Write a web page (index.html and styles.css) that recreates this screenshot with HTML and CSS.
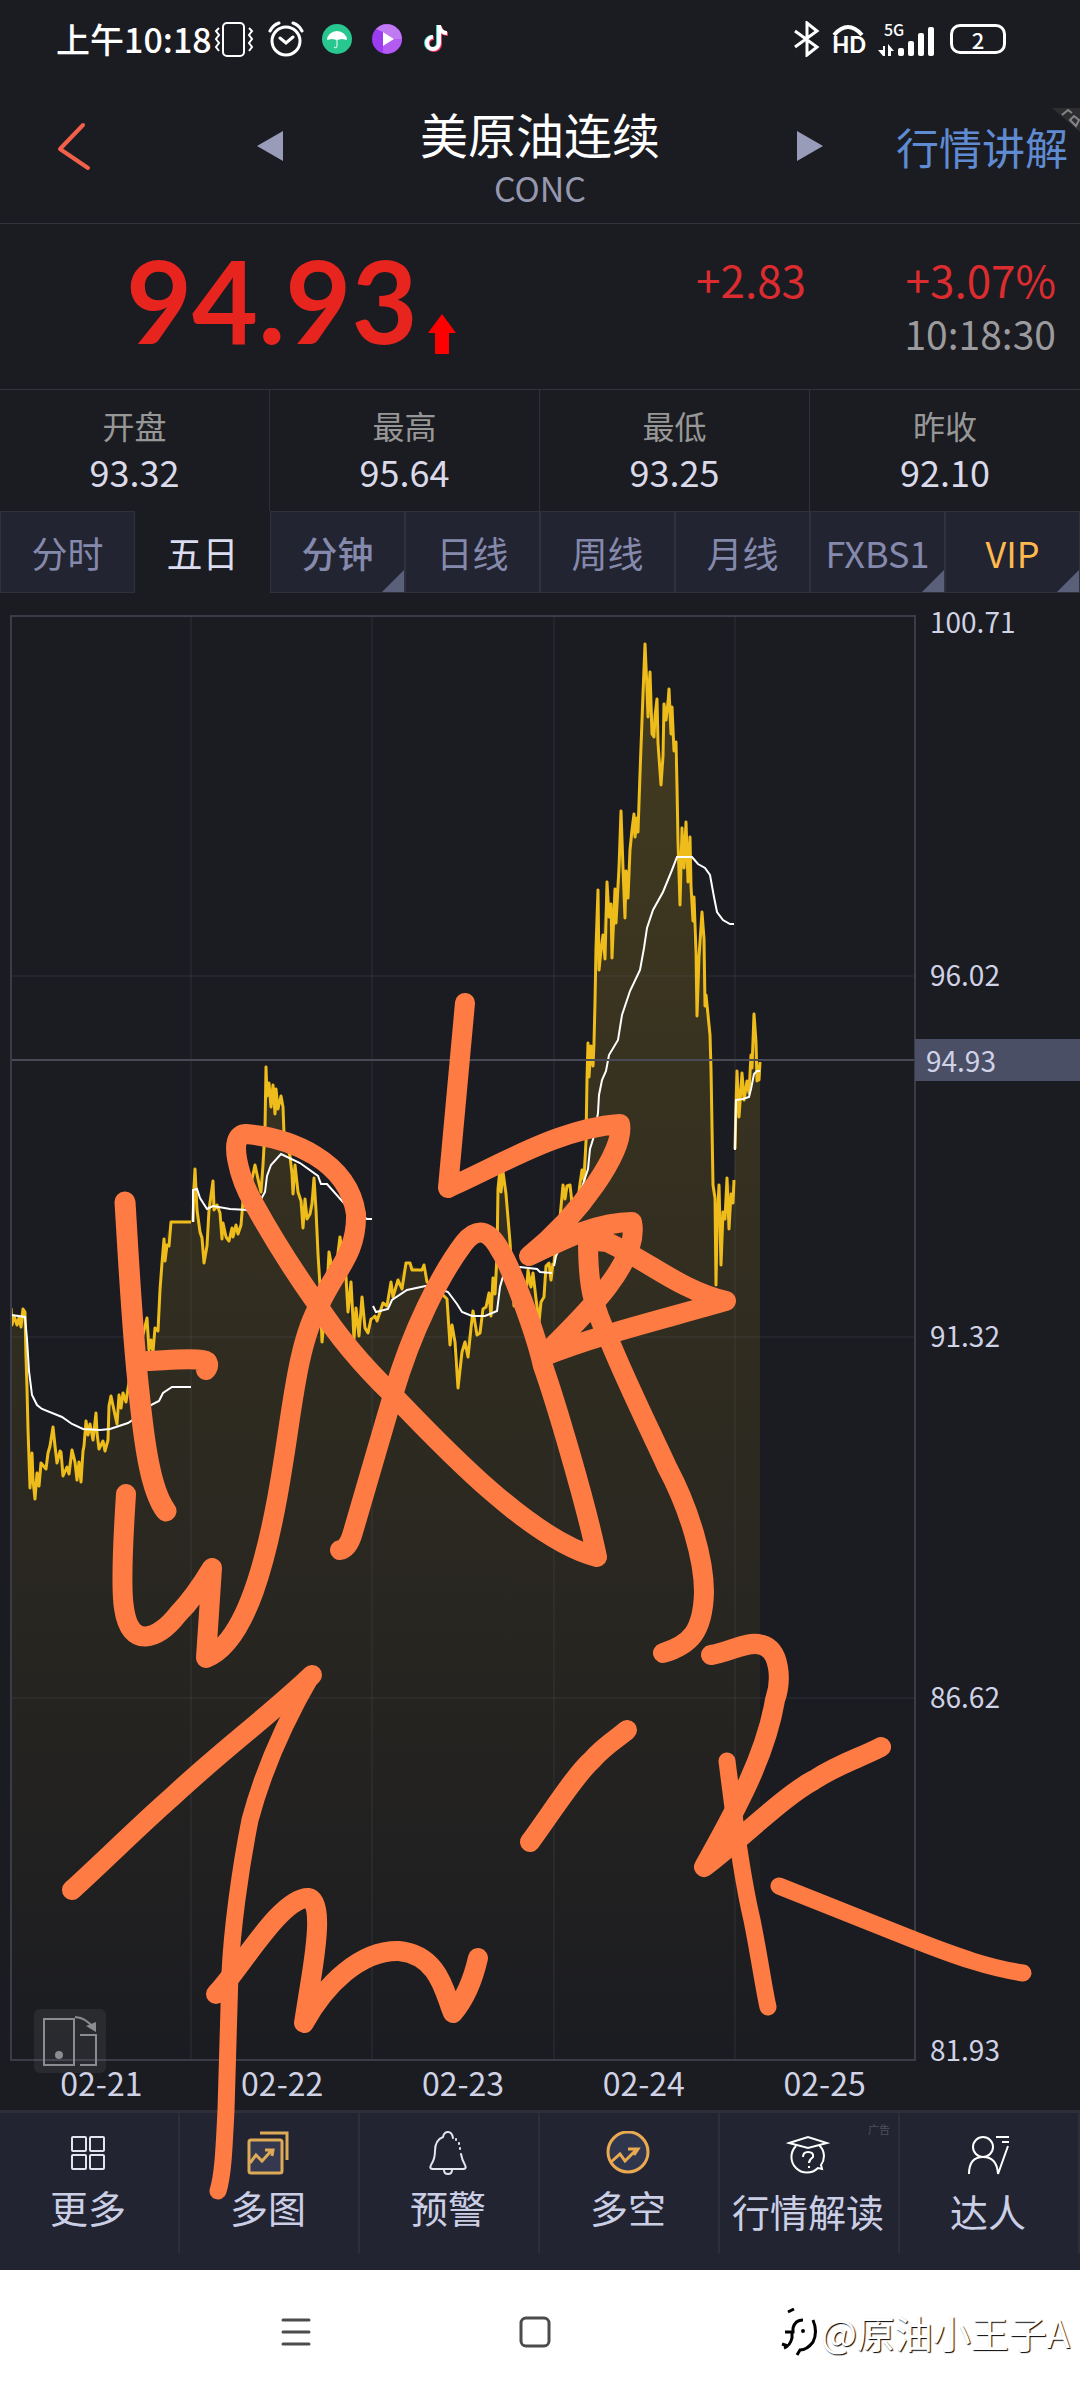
FILE: index.html
```html
<!DOCTYPE html>
<html lang="zh-CN">
<head>
  <meta charset="UTF-8" />
  <meta name="viewport" content="width=device-width, initial-scale=1.0"/>
  <title>美原油连续</title>
  <link rel="stylesheet" href="styles.css">
</head>
<body>
  <div class="screen">
    <div class="status-bar">
      <span class="clock">上午10:18</span>
      <svg class="vibrate" width="40" height="38" viewBox="0 0 40 38" fill="none" stroke="#fff" stroke-width="2">
        <rect x="9" y="3" width="21" height="33" rx="4"/>
        <path d="M5 8l-3 3 3 4-3 4 3 4-3 4 3 4M35 8l3 3-3 4 3 4-3 4 3 4-3 4"/>
      </svg>
      <svg class="alarm" width="36" height="38" viewBox="0 0 36 38" fill="none" stroke="#fff" stroke-width="3" stroke-linecap="round">
        <circle cx="18" cy="21" r="14"/>
        <path d="M12 18l6 5 7-6M2 11q3-6 9-8M34 11q-3-6-9-8"/>
      </svg>
      <svg class="app-dot" width="30" height="30" viewBox="0 0 30 30">
        <circle cx="15" cy="15" r="15" fill="#27c78f"/>
        <path d="M5 16a10 9 0 0 1 20 0l-5-1-5 1-5-1z" fill="#fff"/>
        <path d="M15 15v7q0 3-3 1" fill="none" stroke="#fff" stroke-width="1"/>
      </svg>
      <svg class="app-dot" width="30" height="30" viewBox="0 0 30 30">
        <circle cx="15" cy="15" r="15" fill="#9c3cf0"/>
        <path d="M4 5a15 15 0 0 1 26 10L22 15 11 8z" fill="#c07af2"/>
        <path d="M22 15l8 0a15 15 0 0 1-19 14v-7z" fill="#b45cf2"/>
        <path d="M11 8v14l11-7z" fill="#fff"/>
      </svg>
      <svg class="app-dot" width="28" height="30" viewBox="0 0 28 30" fill="none" stroke-width="4">
        <path d="M16 1v18a6 6 0 1 1-6-6M16 2q2 7 8 7" stroke="#25d9d3"/>
        <path d="M18 2v18a6 6 0 1 1-6-6M18 3q2 7 8 7" stroke="#f0355d"/>
        <path d="M17 1v18a6 6 0 1 1-6-6M17 2q2 7 8 7" stroke="#fff"/>
      </svg>
      <span class="spacer"></span>
      <svg class="bluetooth" width="26" height="36" viewBox="0 0 26 36" fill="none" stroke="#fff" stroke-width="3">
        <path d="M1 10l22 16-10 8V2l10 8L1 26"/>
      </svg>
      <span class="hd">
        <svg width="32" height="12" viewBox="0 0 32 12" fill="none" stroke="#fff" stroke-width="4"><path d="M2 11q14-16 28 0"/></svg>
        HD
      </span>
      <span class="signal">
        <small>5G</small>
        <svg width="58" height="36" viewBox="0 0 58 36" fill="#fff">
          <path d="M5 35V25h2v10H5L0 29h5M10 35V23l6 7h-3v5z"/>
          <rect x="20" y="27" width="6" height="8" rx="2"/>
          <rect x="30" y="20" width="6" height="15" rx="2"/>
          <rect x="40" y="12" width="6" height="23" rx="2"/>
          <rect x="50" y="6" width="6" height="29" rx="2"/>
        </svg>
      </span>
      <span class="battery">2</span>
    </div>

    <header class="header">
      <button class="icon-btn back" aria-label="返回">
        <svg width="40" height="52" viewBox="0 0 40 52" fill="none" stroke="#f2604a" stroke-width="4" stroke-linecap="round" stroke-linejoin="round"><path d="M29 5L6 29l28 19"/></svg>
      </button>
      <button class="icon-btn" aria-label="上一个">
        <svg width="26" height="30" viewBox="0 0 26 30" fill="#989cb8"><path d="M26 0v30L0 15z"/></svg>
      </button>
      <div class="title">
        <h1>美原油连续</h1>
        <p>CONC</p>
      </div>
      <button class="icon-btn" aria-label="下一个">
        <svg width="26" height="30" viewBox="0 0 26 30" fill="#989cb8"><path d="M0 0v30l26-15z"/></svg>
      </button>
      <a class="lecture" href="#">行情讲解</a>
      <svg class="corner" width="28" height="24" viewBox="0 0 28 24"><path d="M0 0h28v24z" fill="#2e2e31"/><path d="M10 7l6-5 4 3M18 12l4-4 5 4-3 6z" fill="none" stroke="#85868a" stroke-width="2"/></svg>
    </header>

    <section class="quote">
      <div class="price">
        <strong>94.93</strong>
        <svg width="28" height="40" viewBox="0 0 28 40" fill="#f00"><path d="M14 0l14 19h-7v21H7V19H0z"/></svg>
      </div>
      <div class="change">+2.83</div>
      <div class="percent">
        <div class="change">+3.07%</div>
        <time>10:18:30</time>
      </div>
    </section>

    <dl class="stats">
      <div><dt>开盘</dt><dd>93.32</dd></div>
      <div><dt>最高</dt><dd>95.64</dd></div>
      <div><dt>最低</dt><dd>93.25</dd></div>
      <div><dt>昨收</dt><dd>92.10</dd></div>
    </dl>

    <nav class="tabs">
      <button>分时</button>
      <button class="active">五日</button>
      <button class="more strong">分钟</button>
      <button>日线</button>
      <button>周线</button>
      <button>月线</button>
      <button class="more">FXBS1</button>
      <button class="more vip">VIP</button>
    </nav>

    <main class="chart">
      <div class="plot">
        <svg viewBox="11 616 904 1444" preserveAspectRatio="none">
          <defs>
            <linearGradient id="fade" gradientUnits="userSpaceOnUse" x1="0" y1="616" x2="0" y2="2060">
              <stop offset="0" stop-color="#f5c518" stop-opacity="0.19"/>
              <stop offset="1" stop-color="#f5c518" stop-opacity="0"/>
            </linearGradient>
          </defs>
          <path fill="url(#fade)" d="M11 2060V1316L25 1312 28 1429 30 1488 32 1453 35 1495 41 1463 46 1469 53 1430 57 1463 61 1452 63 1474 72 1453 77 1475 81 1478 86 1424 93 1440 96 1416 99 1449 105 1448 111 1400 117 1422 123 1395 130 1378 138 1357 147 1320 150 1348 155 1330 158 1331 164 1242 171 1222H191L195 1172 200 1232 204 1260 213 1183 217 1205 222 1236 229 1241 241 1225 243 1201 255 1165 261 1190 266 1072 271 1103 275 1110 283 1107 284 1134 292 1174 298 1192 303 1226 307 1217 314 1180 318 1254 322 1340 329 1254 335 1277 340 1240 348 1310 354 1334 365 1328 377 1321 398 1280 406 1263 422 1270 427 1282 447 1299 450 1342 458 1384 465 1342 471 1328 480 1333 489 1295 495 1290 499 1176 506 1194 514 1303 528 1272 539 1320 546 1268 553 1263 563 1188 577 1206 586 1141 588 1050 594 1043 598 895 599 968 607 888 612 954 621 816 625 916 632 830 638 828 645 648 648 715 651 690 654 734 657 704 661 782 664 706 669 694 677 787 680 902 686 825 691 886 697 1014 702 914 705 1006 710 1035 713 1185 716 1283 719 1188 721 1262 727 1180 734 1190 735 1149 737 1075 739 1115 742 1075 749 1093 754 1016 757 1080 760 1062V2060z"/>
          <path class="grid" d="M11 976H915M11 1337H915M11 1698H915M191 616V2060M372 616V2060M554 616V2060M735 616V2060"/>
          <g class="line">
            <path d="M11 1308L12 1325 14 1316 17 1325 19 1318 21 1327 23 1309 25 1312 26 1357 27 1388 28 1429 30 1488 32 1453 33 1480 35 1499 37 1473 39 1486 41 1463 46 1469 48 1453 50 1446 53 1427 55 1446 57 1463 60 1451 61 1452 63 1476 67 1467 69 1474 72 1450 75 1462 77 1480 79 1462 81 1482 83 1451 84 1446 86 1421 88 1435 90 1424 93 1440 96 1413 97 1433 99 1449 103 1441 105 1451 108 1440 109 1406 111 1396 115 1415 117 1424 119 1395 121 1408 123 1393 126 1402 130 1376 132 1388 138 1357 142 1339 147 1318 149 1350 151 1340 153 1352 155 1328 158 1331 160 1290 162 1263 164 1239 165 1261 167 1245 169 1246 171 1222 191 1222"/>
            <path d="M193 1222L194 1187 195 1169 197 1210 200 1232 202 1238 204 1263 207 1246 209 1210 213 1181 214 1210 217 1205 220 1213 222 1239 223 1223 226 1237 229 1241 232 1228 233 1237 236 1225 238 1234 241 1225 243 1201 247 1210 252 1179 255 1165 258 1179 261 1192 263 1165 265 1129 266 1067 267 1096 269 1083 271 1107 273 1085 275 1114 276 1089 278 1109 281 1096 283 1107 284 1134 290 1156 292 1174 293 1194 295 1165 298 1192 301 1201 303 1228 305 1199 307 1219 310 1214 312 1204 314 1178 316 1210 318 1254 320 1286 322 1342 324 1320 327 1290 329 1252 332 1268 335 1277 340 1237 343 1259 346 1277 348 1312 351 1282 354 1339 356 1308 359 1336 362 1297 365 1328 368 1333 371 1319 373 1318"/>
            <path d="M373 1318L375 1316 377 1321 383 1303 387 1306 391 1282 393 1297 398 1280 402 1289 406 1263 410 1263 412 1270 422 1270 424 1265 427 1282 432 1285 438 1290 447 1299 450 1345 452 1325 455 1342 458 1388 462 1352 465 1342 468 1357 471 1328 473 1311 477 1335 480 1333 483 1309 486 1307 489 1293 491 1316 493 1278 495 1294 497 1256 498 1189 500 1170 501 1192 503 1172 506 1194 508 1218 510 1242 514 1306 518 1280 522 1284 527 1285 528 1270 531 1287 533 1273 536 1299 539 1322 541 1302 544 1297 546 1266 549 1263 551 1280 553 1263"/>
            <path d="M554 1263L556 1242 560 1218 563 1185 565 1199 567 1186 570 1185 572 1203 577 1208 580 1184 582 1170 584 1180 586 1141 587 1079 588 1043 589 1077 591 1046 593 1066 594 1043 595 1002 596 948 598 890 599 970 601 950 603 935 605 959 607 882 609 917 611 904 612 958 615 889 616 923 619 868 621 811 623 868 625 918 626 871 628 898 630 850 632 830 634 814 635 837 637 818 638 832 640 774 641 747 643 694 645 644 647 689 648 717 649 689 650 672 652 734 654 737 655 716 657 699 658 743 661 785 663 756 664 704 666 720 668 703 669 689 671 734 672 707 674 751 676 742 677 787 678 841 680 905 681 868 682 828 684 868 686 822 688 882 690 837 691 886 693 921 694 897 696 953 697 1016 699 957 702 912 704 939 705 1006 706 995 708 1015 710 1035 711 1069 712 1127 713 1185 715 1198 716 1285 717 1225 719 1185 721 1265 723 1212 725 1219 727 1178 729 1229 731 1194 733 1203 734 1180"/>
            <path d="M735 1149L736 1104 737 1071 739 1117 742 1073 744 1100 747 1081 749 1093 751 1055 752 1068 754 1014 756 1042 757 1081 758 1066 759 1080 760 1062"/>
          </g>
          <g class="avg">
            <path d="M11 1315L25 1317 27 1339 29 1371 32 1395 37 1405 42 1409 62 1417 72 1424 83 1429 100 1430 110 1429 128 1423 137 1417 147 1407 159 1401 163 1393 172 1387 191 1387"/>
            <path d="M193 1222V1190L197 1189 200 1198 207 1209 213 1206 230 1209 248 1210 260 1201 265 1192 267 1176 271 1165 281 1154 300 1163 318 1176 321 1184 327 1184 350 1210 367 1219 372 1219"/>
            <path d="M373 1306L376 1312 388 1309 392 1300 407 1290 430 1285 448 1292 457 1304 462 1312 472 1316 485 1316 497 1311 500 1287 504 1273 520 1267 537 1269 540 1272 552 1273"/>
            <path d="M554 1266L556 1256 568 1230 588 1169 590 1149 594 1136 598 1113 599 1095 602 1080 606 1071 609 1055 618 1040 622 1015 630 991 640 970 644 948 647 928 653 910 663 892 672 870 677 857 692 857 698 864 705 868 710 875 714 897 717 912 723 920 730 924 734 924"/>
            <path d="M735 1150L736 1100 743 1099 749 1097 751 1089 754 1074 757 1071 760 1071"/>
          </g>
          <path class="cross" d="M11 1060H915"/>
        </svg>
        <button class="rotate" aria-label="横屏">
          <svg width="72" height="64" viewBox="0 0 72 64" fill="none" stroke="#8b8c90" stroke-width="2">
            <path d="M10 10h30v46H10zM46 26h16v30H46M41 8q12 1 18 11"/>
            <path d="M52 17l10-4v10z" fill="#8b8c90" stroke="none"/>
            <circle cx="25" cy="46" r="3" fill="#8b8c90"/>
          </svg>
        </button>
      </div>
      <div class="axis">
        <div><span class="top">100.71</span><span>96.02</span></div>
        <div><span>91.32</span></div>
        <div><span>86.62</span></div>
        <div><span class="bottom">81.93</span></div>
        <span class="tag">94.93</span>
      </div>
      <div class="dates">
        <span>02-21</span><span>02-22</span><span>02-23</span><span>02-24</span><span>02-25</span>
      </div>
    </main>

    <nav class="toolbar">
      <a href="#">
        <svg width="44" height="44" viewBox="0 0 44 44" fill="none" stroke="#e4e4ee" stroke-width="2">
          <rect x="6" y="6" width="14" height="14" rx="1"/><rect x="24" y="6" width="14" height="14" rx="1"/>
          <rect x="6" y="24" width="14" height="14" rx="1"/><rect x="24" y="24" width="14" height="14" rx="1"/>
        </svg>
        更多
      </a>
      <a href="#">
        <svg width="44" height="44" viewBox="0 0 44 44" fill="none" stroke="#ddaa58" stroke-width="3">
          <path d="M14 2h27v27"/>
          <rect x="3" y="9" width="33" height="33" rx="2" fill="#343950"/>
          <path d="M4 32l6-8 6 6 10-11M19 19h8l-1 6"/>
        </svg>
        多图
      </a>
      <a href="#">
        <svg width="44" height="44" viewBox="0 0 44 44" fill="none" stroke="#e4e4ee" stroke-width="2" stroke-linecap="round">
          <path d="M27 7q-1-6-5-6t-5 5Q9 9 9 20 9 28 5 34 3 38 7 38H37q4 0 2-4-3-5-4-11M18 39q0 4 4 4t4-4"/>
          <path d="M30 8v1M33 12v1M34 17v1"/>
        </svg>
        预警
      </a>
      <a href="#">
        <svg width="44" height="44" viewBox="0 0 44 44" fill="none" stroke="#eaaa50" stroke-width="3">
          <circle cx="22" cy="21" r="20" fill="#30364e"/>
          <path d="M5 31l9-8 5 7 11-11M22 18h10l-4 6"/>
        </svg>
        多空
      </a>
      <a href="#" class="low">
        <svg width="44" height="44" viewBox="0 0 44 44" fill="none" stroke="#fff" stroke-width="2">
          <path d="M3 12l19-6 19 6-19 5zM10 15a15 15 0 1 0 22 22l4 1-1-4a15 15 0 0 0-2-20"/>
          <path d="M17 26q0-5 5-5 6 0 5 5-4 3-4 6M23 35v2"/>
        </svg>
        行情解读
        <small>广告</small>
      </a>
      <a href="#" class="low">
        <svg width="44" height="44" viewBox="0 0 44 44" fill="none" stroke="#fff" stroke-width="2">
          <circle cx="17" cy="16" r="10"/>
          <path d="M3 43q0-17 14-17t15 17l10-28M30 6h13M36 11h7"/>
        </svg>
        达人
      </a>
    </nav>

    <footer class="system-nav">
      <button class="recent" aria-label="最近任务"><svg width="30" height="28" viewBox="0 0 30 28" stroke="#4c4c4c" stroke-width="3" stroke-linecap="round"><path d="M2 2h26M2 14h26M2 26h26"/></svg></button>
      <button class="home" aria-label="主屏幕"><svg width="32" height="32" viewBox="0 0 32 32" fill="none" stroke="#4c4c4c" stroke-width="3"><rect x="2" y="2" width="28" height="28" rx="5"/></svg></button>
      <span class="watermark">
        <svg width="44" height="48" viewBox="0 0 44 48" fill="none" stroke="#000" stroke-width="3">
          <path d="M11 4l6-3M8 24h8v-4q2-8 10-8M15 24v6q-2 8-8 10M36 12q5 12 0 22-6 8-13 8l-3 5M5 36l6 2"/>
          <circle cx="26" cy="23" r="1" stroke-width="2"/>
        </svg>
        @原油小王子A
      </span>
    </footer>

    <!-- hand-drawn marks over the whole screen -->
    <svg class="doodle" viewBox="0 0 1080 2400">
      <path class="fat" d="M125 1202C128 1250 132 1330 139 1392 144 1440 150 1490 166 1511"/>
      <path d="M147 1361C170 1360 190 1358 202 1360 210 1361 209 1366 206 1370"/>
      <path d="M126 1494C123 1540 121 1590 124 1608 130 1650 158 1640 178 1614 190 1602 203 1583 212 1568L206 1658C246 1642 268 1560 283 1464 292 1410 298 1340 320 1304 335 1270 357 1255 356 1214 348 1160 290 1138 246 1134 226 1134 240 1180 254 1204 275 1242 300 1280 317 1304 340 1340 365 1368 393 1395 440 1444 530 1540 597 1557 585 1500 555 1400 543 1366 535 1330 510 1265 500 1250 488 1228 476 1228 464 1243 440 1275 412 1330 393 1395 380 1440 362 1500 353 1532 350 1543 346 1549 340 1550"/>
      <path d="M465 1003L448 1188C500 1165 560 1128 620 1124 625 1150 580 1215 529 1256 570 1236 600 1222 632 1222 640 1260 590 1310 542 1357 600 1334 660 1320 726 1301 680 1290 650 1262 607 1242L588 1240C588 1285 592 1305 610 1342 630 1390 650 1430 667 1467 690 1510 704 1560 704 1592 703 1632 690 1645 663 1653"/>
      <path d="M711 1655C730 1652 748 1640 762 1645 780 1650 782 1680 775 1700 765 1760 730 1820 704 1867 740 1840 785 1795 814 1780 840 1763 860 1758 881 1747"/>
      <path class="thin" d="M727 1761C732 1800 740 1870 752 1920 760 1960 764 1990 768 2007"/>
      <path class="thin" d="M779 1886L907 1937C960 1958 990 1968 1023 1973"/>
      <path d="M530 1842C550 1815 575 1775 592 1760 605 1745 618 1738 627 1730"/>
      <path d="M72 1890C105 1860 140 1825 172 1797 220 1752 270 1715 312 1675"/>
      <path class="thin" d="M312 1675C280 1730 262 1775 250 1820 240 1870 232 1930 230 1973 228 2030 227 2080 226 2110 224 2150 223 2175 218 2191"/>
      <path d="M216 1994C240 1970 280 1898 308 1898 322 1900 317 1940 312 1973L304 2023C325 1985 360 1950 399 1951 440 1955 445 1995 453 2013 464 2000 473 1980 478 1958"/>
    </svg>
  </div>
</body>
</html>
```
FILE: styles.css
```css
* {
  box-sizing: border-box;
}

body {
  margin: 0;
  background-color: #fff;
  font-family: "Noto Sans CJK SC", "Noto Sans", sans-serif;
  color: #d0d2e6;
}

h1, p, dl, dd {
  margin: 0;
}

button {
  margin: 0;
  padding: 0;
  border: none;
  background: none;
  font: inherit;
  color: inherit;
  cursor: pointer;
}

a {
  color: inherit;
  text-decoration: none;
}

svg {
  display: block;
  flex: none;
}

.screen {
  position: relative;
  background-color: #1b1c21;
  overflow: hidden;
}

/* status bar */
.status-bar {
  display: flex;
  align-items: center;
  padding: 20px 74px 20px 56px;
  color: #fff;
}

.clock {
  font-size: 34px;
  font-weight: 500;
  line-height: 38px;
}

.vibrate { margin-left: 2px; }
.alarm { margin-left: 14px; }
.app-dot { margin-left: 18px; }
.app-dot + .app-dot { margin-left: 20px; }
.spacer { flex: 1; }

.hd {
  margin-left: 12px;
  font-family: Lato, sans-serif;
  font-size: 22px;
  font-weight: 900;
  line-height: 18px;
}

.signal {
  position: relative;
  margin-left: 12px;
}

.signal small {
  position: absolute;
  top: 0;
  left: 6px;
  font-size: 16px;
  font-weight: 500;
  line-height: 16px;
}

.battery {
  width: 56px;
  margin-left: 14px;
  border: 3px solid #fff;
  border-radius: 10px;
  font-size: 22px;
  font-weight: 500;
  line-height: 24px;
  text-align: center;
}

/* header */
.header {
  position: relative;
  display: grid;
  grid-template-columns: 1fr 84px 456px 84px 1fr;
  justify-items: center;
  align-items: center;
  padding: 23px 0 15px;
  border-bottom: 1px solid #32333d;
}

.icon-btn,
.lecture {
  padding-bottom: 18px;
}

.header .back {
  justify-self: start;
  margin-left: 54px;
}

.title {
  text-align: center;
}

.title h1 {
  margin-bottom: 3px;
  font-size: 48px;
  font-weight: 400;
  line-height: 64px;
  color: #fff;
}

.title p {
  font-size: 34px;
  line-height: 40px;
  color: #9698b0;
}

.lecture {
  justify-self: end;
  margin-right: 12px;
  font-size: 43px;
  line-height: 56px;
  white-space: nowrap;
  color: #5f8bd2;
}

.corner {
  position: absolute;
  top: 30px;
  right: 0;
}

/* last price */
.quote {
  display: grid;
  grid-template-columns: 1fr 160px 250px;
  padding: 16px 24px 29px 126px;
  border-bottom: 1px solid #32333d;
}

.price {
  display: flex;
  align-items: flex-end;
  gap: 10px;
}

.price strong {
  font-family: Lato, sans-serif;
  font-size: 114px;
  font-weight: 700;
  line-height: 120px;
  color: #e8241f;
}

.price svg {
  margin-bottom: 6px;
}

.change {
  padding-top: 11px;
  font-size: 44px;
  line-height: 56px;
  text-align: right;
  color: #dc2c30;
}

.percent {
  text-align: right;
}

.percent time {
  display: block;
  font-size: 39px;
  line-height: 53px;
  color: #9b9b9f;
}

.stats {
  display: grid;
  grid-template-columns: repeat(4, 1fr);
  text-align: center;
}

.stats div {
  padding: 13px 0 16px;
  border-right: 1px solid #30313a;
}

.stats div:last-child {
  border-right: none;
}

.stats dt {
  font-size: 32px;
  line-height: 44px;
  color: #979797;
}

.stats dd {
  font-size: 36px;
  line-height: 48px;
  color: #dadaea;
}

/* period tabs */
.tabs {
  display: grid;
  grid-template-columns: repeat(8, 1fr);
}

.tabs button {
  position: relative;
  border: 1px solid #30313b;
  background-color: #232432;
  font-size: 36px;
  line-height: 80px;
  color: #858aad;
}

.tabs .active {
  border-color: #1b1c21;
  background-color: #1b1c21;
  color: #dcdcf0;
}

.tabs .strong {
  font-weight: 500;
}

.tabs .vip {
  color: #ffb94c;
}

.tabs .more::after {
  content: "";
  position: absolute;
  right: 0;
  bottom: 0;
  border: 11px solid transparent;
  border-right-color: #5b607a;
  border-bottom-color: #5b607a;
}

/* chart */
.chart {
  display: grid;
  grid-template-columns: 1fr 165px;
  padding: 23px 0 6px 11px;
}

.plot {
  position: relative;
}

.plot > svg {
  width: 100%;
  height: auto;
  aspect-ratio: 904 / 1444;
  outline: 2px solid #3b3c47;
  outline-offset: -1px;
}

.grid, .line, .avg, .cross {
  fill: none;
}

.grid {
  stroke: #60616e;
  stroke-opacity: 0.3;
}

.line {
  stroke: #eebd1c;
  stroke-width: 3;
  stroke-linejoin: round;
}

.avg {
  stroke: #fff;
  stroke-width: 2;
}

.cross {
  stroke: #484a56;
  stroke-width: 2;
}

.rotate {
  position: absolute;
  left: 23px;
  bottom: -13px;
  border-radius: 6px;
  background-color: rgba(120, 120, 125, 0.16);
}

.axis {
  position: relative;
  display: grid;
  grid-template-rows: repeat(4, 1fr);
  font-size: 28px;
  line-height: 28px;
}

.axis div {
  display: flex;
  flex-direction: column;
  justify-content: flex-end;
  padding-left: 15px;
}

.axis div span {
  margin-bottom: -11px;
}

.axis div .top {
  margin: -9px 0 auto;
}

.axis div .bottom {
  margin-bottom: -3px;
}

.axis .tag {
  position: absolute;
  top: 29.3%;
  left: 0;
  right: 0;
  padding-left: 11px;
  background-color: #4a4f66;
  line-height: 42px;
}

.dates {
  display: grid;
  grid-template-columns: repeat(5, 1fr);
  font-size: 32px;
  line-height: 44px;
  text-align: center;
}

/* bottom toolbar */
.toolbar {
  display: grid;
  grid-template-columns: repeat(6, 1fr);
  padding-bottom: 17px;
  border-top: 3px solid #2e2f39;
  background-color: #232432;
}

.toolbar a {
  position: relative;
  display: flex;
  flex-direction: column;
  align-items: center;
  gap: 9px;
  padding: 18px 2px 23px 0;
  border-right: 2px solid #2e2f39;
  font-size: 38px;
  line-height: 46px;
  white-space: nowrap;
  color: #cbcfe6;
}

.toolbar .low {
  gap: 13px;
  padding-bottom: 19px;
}

.toolbar small {
  position: absolute;
  top: 8px;
  right: 8px;
  font-size: 11px;
  line-height: 16px;
  color: #50515e;
}

/* android navigation */
.system-nav {
  display: grid;
  grid-template-columns: repeat(3, 1fr);
  align-items: center;
  padding: 38px 10px 44px 0;
  background-color: #fff;
}

.system-nav .recent {
  justify-self: end;
  margin-right: 46px;
}

.system-nav .home {
  justify-self: center;
}

.watermark {
  display: flex;
  align-items: center;
  justify-self: end;
  font-size: 38px;
  line-height: 48px;
  white-space: nowrap;
  color: #fff;
  text-shadow: 1px 1px 1px #000;
}

.doodle {
  position: absolute;
  top: 0;
  left: 0;
  width: 100%;
  fill: none;
  stroke: #ff7b44;
  stroke-width: 20;
  stroke-linecap: round;
  stroke-linejoin: round;
  pointer-events: none;
}

.doodle .fat { stroke-width: 21; }
.doodle .thin { stroke-width: 17; }
```
